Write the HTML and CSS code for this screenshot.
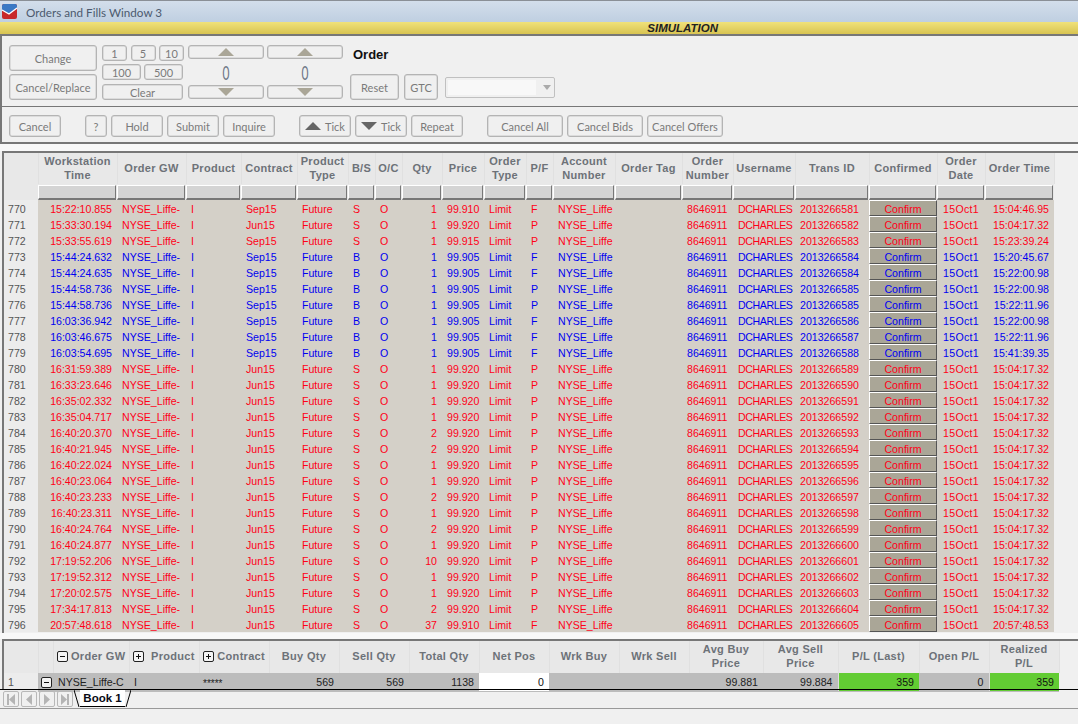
FILE: index.html
```html
<!doctype html>
<html lang="en">
  <head>
    <meta charset="UTF-8" />
    <title>Orders and Fills Window 3</title>
    <link rel="stylesheet" href="styles.css">
  </head>
  <body>
    <div class="titlebar">
      <svg class="app-icon" width="17" height="17" viewBox="0 0 17 17">
        <rect x="1" y="1" width="15" height="15" rx="2" fill="#c8282a" />
        <path d="M1 3 Q1 1 3 1 H14 Q16 1 16 3 V5 L8 11 L1 7 Z" fill="#3a78c4" />
        <path d="M1 7 L8 11 L16 5" fill="none" stroke="#fff" stroke-width="1.3" />
      </svg>
      <span>Orders and Fills Window 3</span>
    </div>
    <div class="simbar">SIMULATION</div>

    <div class="order-bar">
      <div class="col-main">
        <button class="btn btn-big">Change</button>
        <button class="btn btn-big">Cancel/Replace</button>
      </div>
      <div class="col-qty">
        <div class="qty-row">
          <button class="btn b25">1</button>
          <button class="btn b25">5</button>
          <button class="btn b25">10</button>
        </div>
        <div class="qty-row qty-row2">
          <button class="btn b39">100</button>
          <button class="btn b39">500</button>
        </div>
        <button class="btn b-clear">Clear</button>
      </div>
      <div class="spinner">
        <button class="btn spin-btn"><i class="tri tri-up"></i></button>
        <div class="spin-value">0</div>
        <button class="btn spin-btn"><i class="tri tri-down"></i></button>
      </div>
      <div class="spinner">
        <button class="btn spin-btn"><i class="tri tri-up"></i></button>
        <div class="spin-value">0</div>
        <button class="btn spin-btn"><i class="tri tri-down"></i></button>
      </div>
      <div class="col-order">
        <div class="order-label">Order</div>
        <div class="order-controls">
          <button class="btn b-reset">Reset</button>
          <button class="btn b-gtc">GTC</button>
          <div class="combo"><div class="combo-field"></div><i class="combo-arrow"></i></div>
        </div>
      </div>
    </div>

    <div class="action-bar">
      <button class="btn b52">Cancel</button>
      <button class="btn b22 ml-a">?</button>
      <button class="btn b52">Hold</button>
      <button class="btn b52">Submit</button>
      <button class="btn b52">Inquire</button>
      <button class="btn b52 ml-a tick"><i class="tick-up"></i>Tick</button>
      <button class="btn b52 tick"><i class="tick-down"></i>Tick</button>
      <button class="btn b52">Repeat</button>
      <button class="btn b76 ml-a">Cancel All</button>
      <button class="btn b76">Cancel Bids</button>
      <button class="btn b76">Cancel Offers</button>
    </div>

    <div class="gap gap-top"></div>
    <div class="grid-wrap">
      <table class="grid orders">
        <colgroup>
          <col style="width:34px"><col style="width:79px"><col style="width:69px"><col style="width:55px">
          <col style="width:56px"><col style="width:51px"><col style="width:27px"><col style="width:27px">
          <col style="width:40px"><col style="width:42px"><col style="width:42px"><col style="width:27px">
          <col style="width:62px"><col style="width:67px"><col style="width:51px"><col style="width:62px">
          <col style="width:74px"><col style="width:68px"><col style="width:48px"><col style="width:69px">
        </colgroup>
        <thead>
          <tr class="head">
            <th></th>
            <th>Workstation<br>Time</th>
            <th>Order GW</th>
            <th>Product</th>
            <th>Contract</th>
            <th>Product<br>Type</th>
            <th>B/S</th>
            <th>O/C</th>
            <th>Qty</th>
            <th>Price</th>
            <th>Order<br>Type</th>
            <th>P/F</th>
            <th>Account<br>Number</th>
            <th>Order Tag</th>
            <th>Order<br>Number</th>
            <th>Username</th>
            <th>Trans ID</th>
            <th>Confirmed</th>
            <th>Order<br>Date</th>
            <th>Order Time</th>
          </tr>
          <tr class="filters" id="filterRow"></tr>
        </thead>
        <tbody id="ordersBody"></tbody>
      </table>
    </div>

    <div class="gap"></div>
    <div class="grid-wrap summary-wrap">
      <table class="grid summary">
        <colgroup>
          <col style="width:34px"><col style="width:15px"><col style="width:76px"><col style="width:70px">
          <col style="width:70px"><col style="width:70px"><col style="width:70px"><col style="width:70px">
          <col style="width:70px"><col style="width:70px"><col style="width:70px"><col style="width:74px">
          <col style="width:75px"><col style="width:81px"><col style="width:70px"><col style="width:70px">
        </colgroup>
        <thead>
          <tr class="head">
            <th></th>
            <th></th>
            <th class="nowrap"><i class="box minus"></i> Order GW</th>
            <th class="nowrap"><i class="box plus"></i>&nbsp; Product</th>
            <th class="nowrap"><i class="box plus"></i> Contract</th>
            <th>Buy Qty</th>
            <th>Sell Qty</th>
            <th>Total Qty</th>
            <th>Net Pos</th>
            <th>Wrk Buy</th>
            <th>Wrk Sell</th>
            <th>Avg Buy<br>Price</th>
            <th>Avg Sell<br>Price</th>
            <th>P/L (Last)</th>
            <th>Open P/L</th>
            <th>Realized<br>P/L</th>
          </tr>
        </thead>
        <tbody>
          <tr class="sum-row">
            <td class="rownum">1</td>
            <td class="sum-cell"><i class="box minus"></i></td>
            <td class="sum-cell nowrap">NYSE_Liffe-C</td>
            <td class="sum-cell">I</td>
            <td class="sum-cell stars">*****</td>
            <td class="sum-cell r">569</td>
            <td class="sum-cell r">569</td>
            <td class="sum-cell r">1138</td>
            <td class="sum-cell r net">0</td>
            <td class="sum-cell"></td>
            <td class="sum-cell"></td>
            <td class="sum-cell r">99.881</td>
            <td class="sum-cell r">99.884</td>
            <td class="sum-cell r pl">359</td>
            <td class="sum-cell r">0</td>
            <td class="sum-cell r pl">359</td>
          </tr>
        </tbody>
      </table>
    </div>

    <div class="tabbar">
      <div class="tab-nav">
        <button class="nav-btn"><svg width="10" height="11" viewBox="0 0 10 11"><path d="M1 0h2v11H1zM9 0v11L3 5.5z" fill="#b4b4b4"/></svg></button>
        <button class="nav-btn"><svg width="10" height="11" viewBox="0 0 10 11"><path d="M8 0v11L2 5.5z" fill="#b4b4b4"/></svg></button>
        <button class="nav-btn"><svg width="10" height="11" viewBox="0 0 10 11"><path d="M2 0v11l6-5.5z" fill="#b4b4b4"/></svg></button>
        <button class="nav-btn"><svg width="10" height="11" viewBox="0 0 10 11"><path d="M9 0H7v11h2zM1 0v11l6-5.5z" fill="#b4b4b4"/></svg></button>
      </div>
      <div class="tab">
        <svg width="6" height="17" viewBox="0 0 6 17"><path d="M0 0L5 17" stroke="#000" fill="none"/></svg>
        <span class="tab-label">Book 1</span>
        <svg width="6" height="17" viewBox="0 0 6 17"><path d="M6 0L1 17" stroke="#000" fill="none"/></svg>
      </div>
    </div>
    <div class="statusbar"></div>

    <script src="script.js"></script>
  </body>
</html>
```

FILE: styles.css
```css
body {
  font-family: "Liberation Sans", Arial, sans-serif;
  margin: 0;
  width: 1078px;
  height: 724px;
  overflow: hidden;
  background-color: #f0f0f0;
}
.titlebar {
  height: 22px;
  box-sizing: border-box;
  border-top: 1px solid #8a8f96;
  display: flex;
  align-items: center;
  padding-left: 1px;
  background: linear-gradient(#d3deeb, #bfcfe1);
  font-family: Lato, sans-serif;
  font-size: 11.7px;
  color: #4c5a6e;
}
.app-icon {
  margin-right: 8px;
}
.simbar {
  height: 14px;
  box-sizing: border-box;
  border-bottom: 2px solid #777;
  background: linear-gradient(#f0e27a, #d8c452);
  padding-right: 360px;
  text-align: right;
  font-size: 11.5px;
  line-height: 13px;
  font-weight: bold;
  font-style: italic;
  color: #222;
}
.btn {
  font-family: Lato, sans-serif;
  font-size: 11px;
  color: #7a7a7a;
  background-color: #f0f0f0;
  border: 1px solid #b4b4b4;
  box-shadow: inset 0 0 0 0.5px #c8c8c8;
  border-radius: 3px;
  padding: 0;
  margin: 0;
  display: block;
  white-space: nowrap;
}
.order-bar {
  height: 71px;
  box-sizing: border-box;
  display: flex;
  padding: 9px 0 0 9px;
  border-left: 2px solid #777;
  border-bottom: 1px solid #777;
}
.order-bar > * {
  flex: none;
}
.col-main {
  width: 88px;
  margin-left: -2px;
  margin-right: 5px;
}
.btn-big {
  width: 88px;
  height: 26px;
  margin-bottom: 3px;
}
.col-qty {
  width: 82px;
  margin-right: 4px;
}
.qty-row {
  display: flex;
  justify-content: space-between;
  height: 16px;
  margin-bottom: 3px;
}
.qty-row2 {
  margin-bottom: 4px;
  padding-right: 1px;
}
.b25 {
  width: 25px;
  height: 16px;
}
.b39 {
  width: 39px;
  height: 16px;
}
.b-clear {
  width: 81px;
  height: 16px;
}
.spinner {
  width: 76px;
  margin-right: 3px;
}
.spin-btn {
  width: 76px;
  height: 14px;
  position: relative;
}
.spin-value {
  height: 26px;
  line-height: 26px;
  text-align: center;
  font-family: Lato, sans-serif;
  font-size: 20px;
  color: #6c7686;
  transform: scaleX(0.6);
}
.tri {
  display: block;
  width: 0;
  height: 0;
  margin: 0 auto;
  border-left: 8px solid transparent;
  border-right: 8px solid transparent;
}
.tri-up {
  border-bottom: 8px solid #aaa697;
}
.tri-down {
  border-top: 8px solid #aaa697;
}
.col-order {
  margin-left: 4px;
}
.order-label {
  height: 29px;
  line-height: 20px;
  padding-left: 3px;
  font-size: 13px;
  font-weight: bold;
  color: #111;
}
.order-controls {
  display: flex;
  align-items: center;
}
.b-reset {
  width: 49px;
  height: 26px;
  margin-right: 5px;
}
.b-gtc {
  width: 34px;
  height: 26px;
  margin-right: 7px;
}
.combo {
  width: 110px;
  height: 21px;
  box-sizing: border-box;
  border: 1px solid #c0c0c0;
  border-radius: 2px;
  background-color: #f0f0f0;
  display: flex;
  align-items: center;
  padding: 2px;
}
.combo-field {
  width: 88px;
  height: 15px;
  background-color: #f8f8f8;
}
.combo-arrow {
  width: 0;
  height: 0;
  margin-left: 7px;
  border-left: 4px solid transparent;
  border-right: 4px solid transparent;
  border-top: 5px solid #aaa;
}
.action-bar {
  height: 37px;
  box-sizing: border-box;
  display: flex;
  align-items: flex-start;
  gap: 4px;
  padding: 8px 0 0 7px;
  border-left: 2px solid #777;
  border-bottom: 2px solid #777;
}
.action-bar .btn {
  height: 22px;
}
.b52 {
  width: 52px;
}
.b22 {
  width: 22px;
}
.b76 {
  width: 76px;
}
.ml-a {
  margin-left: 20px;
}
.tick {
  display: flex;
  align-items: center;
  justify-content: center;
  gap: 4px;
}
.tick-up,
.tick-down {
  width: 0;
  height: 0;
  border-left: 8px solid transparent;
  border-right: 8px solid transparent;
}
.tick-up {
  border-bottom: 8px solid #666;
}
.tick-down {
  border-top: 8px solid #666;
}
.gap {
  height: 6px;
  background-color: #f8f8f8;
}
.gap-top {
  height: 7px;
}
.grid-wrap {
  margin-left: 2px;
  height: 482px;
  box-sizing: border-box;
  background-color: #f0f0f0;
  border-top: 2px solid #777;
  border-left: 2px solid #777;
}
.grid {
  table-layout: fixed;
  border-collapse: collapse;
  font-size: 10.6px;
}
.orders {
  width: 1050px;
}
.summary {
  width: 1055px;
}
.grid th {
  padding: 0;
  font-size: 11px;
  line-height: 14px;
  letter-spacing: 0.3px;
  font-weight: bold;
  color: #6d7278;
  text-align: center;
  background-color: #e8e8e8;
  border-right: 1px solid #e0e0e0;
  overflow: hidden;
}
.nowrap {
  white-space: nowrap;
}
.head th {
  height: 29px;
  padding-bottom: 2px;
}
.filters th {
  height: 16px;
  padding: 0 1px 0 0;
  border-right: 0;
  background-color: #e8e8e8;
}
.filter-btn {
  height: 15px;
  box-sizing: border-box;
  background-color: #d4d4d4;
  border-top: 1px solid #fff;
  border-left: 1px solid #fff;
  border-bottom: 2px solid #777;
  border-right: 1px solid #777;
}
.orders td {
  height: 15px;
  padding: 1px 5px 0 5px;
  white-space: nowrap;
  overflow: hidden;
  background-color: #d4d0c8;
}
.orders .rownum,
.summary .rownum {
  background-color: #ececec;
  color: #555;
  padding-left: 4px;
}
.sell td {
  color: #ff0018;
}
.buy td {
  color: #0000f0;
}
.orders .rownum {
  color: #555;
}
.r {
  text-align: right;
}
.c {
  text-align: center;
}
.user {
  letter-spacing: -0.4px;
}
.date {
  letter-spacing: 0.3px;
}
.orders td.btn-cell {
  padding: 0;
}
.confirm {
  display: block;
  width: 100%;
  height: 16px;
  box-sizing: border-box;
  padding: 3px 0 0 0;
  font-family: "Liberation Sans", sans-serif;
  font-size: 10.6px;
  line-height: 11px;
  color: #ff0018;
  background-color: #aaa697;
  border-top: 1px solid #fff;
  border-left: 1px solid #fff;
  border-bottom: 1px solid #555;
  border-right: 1px solid #555;
}
.buy .confirm {
  color: #0000f0;
}
.summary-wrap {
  height: 50px;
}
.summary .head th {
  height: 30px;
}
.sum-cell {
  height: 14px;
  padding: 0 5px;
  background-color: #bcbcbc;
  color: #222;
  overflow: hidden;
  border-bottom: 1px solid #bcbcbc;
}
.summary td:nth-child(2) {
  padding: 0 0 0 3px;
}
.stars {
  font-size: 10px;
  line-height: 10px;
  padding: 4px 0 0 4px;
}
.net {
  background-color: #fff;
  color: #111;
}
.pl {
  background-color: #62cc33;
  color: #111;
  border-left: 1px solid #ddd;
}
.box {
  display: inline-block;
  position: relative;
  width: 9px;
  height: 9px;
  border: 1px solid #222;
  border-radius: 2px;
  background-color: #f4f4f4;
  vertical-align: -2px;
}
.box::before {
  content: "";
  position: absolute;
  left: 2px;
  top: 4px;
  width: 5px;
  height: 1px;
  background-color: #111;
}
.plus::after {
  content: "";
  position: absolute;
  left: 4px;
  top: 2px;
  width: 1px;
  height: 5px;
  background-color: #111;
}
.tabbar {
  height: 20px;
  box-sizing: border-box;
  border-top: 1px solid #000;
  border-bottom: 1px solid #999;
  display: flex;
  padding-left: 1px;
}
.tab-nav {
  display: flex;
  gap: 2px;
  padding: 1px 0 0 2px;
}
.nav-btn {
  width: 16px;
  height: 16px;
  padding: 0;
  display: flex;
  align-items: center;
  justify-content: center;
  background-color: #f0f0f0;
  border: 1px solid #b8b8b8;
  border-radius: 2px;
}
.tab {
  margin-left: 1px;
  display: flex;
  height: 17px;
}
.tab-label {
  width: 45px;
  text-align: center;
  box-sizing: border-box;
  border-bottom: 1px solid #000;
  font-size: 11.5px;
  font-weight: bold;
  line-height: 17px;
  color: #0a0a14;
  background-color: #fff;
}
.statusbar {
  height: 14px;
  background-color: #f0f0f0;
}
```

FILE: script.js
```js
// time, contract, side, qty, price, p/f, trans id suffix, order time -- rows start at 770
const ROWS = [
  ["15:22:10.855", "Sep15", "S", 1, "99.910", "F", "581", "15:04:46.95"],
  ["15:33:30.194", "Jun15", "S", 1, "99.920", "P", "582", "15:04:17.32"],
  ["15:33:55.619", "Sep15", "S", 1, "99.915", "P", "583", "15:23:39.24"],
  ["15:44:24.632", "Sep15", "B", 1, "99.905", "F", "584", "15:20:45.67"],
  ["15:44:24.635", "Sep15", "B", 1, "99.905", "F", "584", "15:22:00.98"],
  ["15:44:58.736", "Sep15", "B", 1, "99.905", "P", "585", "15:22:00.98"],
  ["15:44:58.736", "Sep15", "B", 1, "99.905", "P", "585", "15:22:11.96"],
  ["16:03:36.942", "Sep15", "B", 1, "99.905", "F", "586", "15:22:00.98"],
  ["16:03:46.675", "Sep15", "B", 1, "99.905", "F", "587", "15:22:11.96"],
  ["16:03:54.695", "Sep15", "B", 1, "99.905", "F", "588", "15:41:39.35"],
  ["16:31:59.389", "Jun15", "S", 1, "99.920", "P", "589", "15:04:17.32"],
  ["16:33:23.646", "Jun15", "S", 1, "99.920", "P", "590", "15:04:17.32"],
  ["16:35:02.332", "Jun15", "S", 1, "99.920", "P", "591", "15:04:17.32"],
  ["16:35:04.717", "Jun15", "S", 1, "99.920", "P", "592", "15:04:17.32"],
  ["16:40:20.370", "Jun15", "S", 2, "99.920", "P", "593", "15:04:17.32"],
  ["16:40:21.945", "Jun15", "S", 2, "99.920", "P", "594", "15:04:17.32"],
  ["16:40:22.024", "Jun15", "S", 1, "99.920", "P", "595", "15:04:17.32"],
  ["16:40:23.064", "Jun15", "S", 1, "99.920", "P", "596", "15:04:17.32"],
  ["16:40:23.233", "Jun15", "S", 2, "99.920", "P", "597", "15:04:17.32"],
  ["16:40:23.311", "Jun15", "S", 1, "99.920", "P", "598", "15:04:17.32"],
  ["16:40:24.764", "Jun15", "S", 2, "99.920", "P", "599", "15:04:17.32"],
  ["16:40:24.877", "Jun15", "S", 1, "99.920", "P", "600", "15:04:17.32"],
  ["17:19:52.206", "Jun15", "S", 10, "99.920", "P", "601", "15:04:17.32"],
  ["17:19:52.312", "Jun15", "S", 1, "99.920", "P", "602", "15:04:17.32"],
  ["17:20:02.575", "Jun15", "S", 1, "99.920", "P", "603", "15:04:17.32"],
  ["17:34:17.813", "Jun15", "S", 2, "99.920", "P", "604", "15:04:17.32"],
  ["20:57:48.618", "Jun15", "S", 37, "99.910", "F", "605", "20:57:48.53"],
];

const filterRow = document.getElementById("filterRow");
filterRow.innerHTML = "<th></th>" + '<th><div class="filter-btn"></div></th>'.repeat(19);

const body = document.getElementById("ordersBody");
ROWS.forEach((row, i) => {
  const [time, contract, side, qty, price, pf, trans, orderTime] = row;
  const tr = document.createElement("tr");
  tr.className = side === "B" ? "buy" : "sell";
  tr.innerHTML = `
    <td class="rownum">${770 + i}</td>
    <td class="r">${time}</td>
    <td>NYSE_Liffe-</td>
    <td>I</td>
    <td>${contract}</td>
    <td>Future</td>
    <td>${side}</td>
    <td>O</td>
    <td class="r">${qty}</td>
    <td class="r">${price}</td>
    <td>Limit</td>
    <td>${pf}</td>
    <td>NYSE_Liffe</td>
    <td></td>
    <td>8646911</td>
    <td class="user">DCHARLES</td>
    <td>2013266${trans}</td>
    <td class="btn-cell"><button class="confirm">Confirm</button></td>
    <td class="c date">15Oct1</td>
    <td class="r">${orderTime}</td>`;
  body.appendChild(tr);
});
```
